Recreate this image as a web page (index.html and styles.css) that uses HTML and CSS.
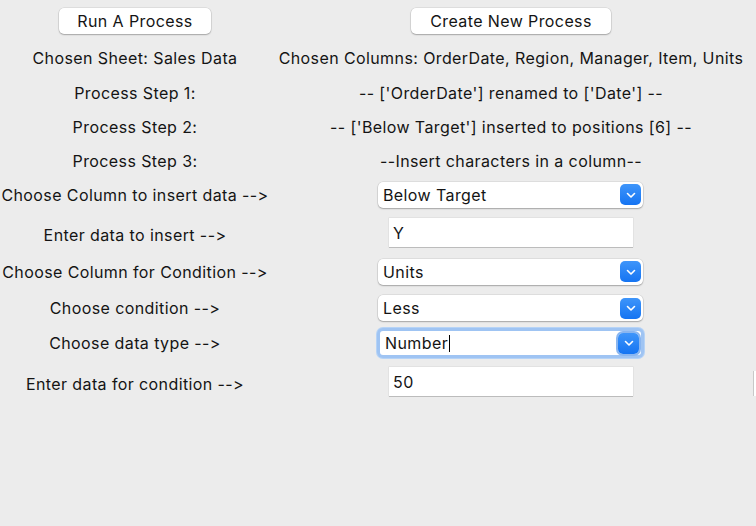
FILE: index.html
```html
<!DOCTYPE html>
<html>
<head>
<meta charset="utf-8">
<link rel="stylesheet" href="styles.css">
</head>
<body>
<div class="app">
  <div class="cell"><button class="btn btn-run">Run A Process</button></div>
  <div class="cell"><button class="btn btn-create">Create New Process</button></div>
  <div class="extra"></div>

  <div class="cell label">Chosen Sheet: Sales Data</div>
  <div class="cell label">Chosen Columns: OrderDate, Region, Manager, Item, Units</div>
  <div class="extra"></div>

  <div class="cell label">Process Step 1:</div>
  <div class="cell label">-- ['OrderDate'] renamed to ['Date'] --</div>
  <div class="extra"></div>

  <div class="cell label">Process Step 2:</div>
  <div class="cell label">-- ['Below Target'] inserted to positions [6] --</div>
  <div class="extra"></div>

  <div class="cell label">Process Step 3:</div>
  <div class="cell label">--Insert characters in a column--</div>
  <div class="extra"></div>

  <div class="cell label">Choose Column to insert data --&gt;</div>
  <div class="cell">
    <div class="combo"><span class="combo-text">Below Target</span><span class="chev"><svg width="10" height="7" viewBox="0 0 10 7"><path d="M1.5 1.5 L5 5 L8.5 1.5" fill="none" stroke="#fff" stroke-width="1.6" stroke-linecap="round" stroke-linejoin="round"/></svg></span></div>
  </div>
  <div class="extra"></div>

  <div class="cell label low">Enter data to insert --&gt;</div>
  <div class="cell"><div class="entry">Y</div></div>
  <div class="extra"></div>

  <div class="cell label">Choose Column for Condition --&gt;</div>
  <div class="cell">
    <div class="combo"><span class="combo-text">Units</span><span class="chev"><svg width="10" height="7" viewBox="0 0 10 7"><path d="M1.5 1.5 L5 5 L8.5 1.5" fill="none" stroke="#fff" stroke-width="1.6" stroke-linecap="round" stroke-linejoin="round"/></svg></span></div>
  </div>
  <div class="extra"></div>

  <div class="cell label">Choose condition --&gt;</div>
  <div class="cell">
    <div class="combo"><span class="combo-text">Less</span><span class="chev"><svg width="10" height="7" viewBox="0 0 10 7"><path d="M1.5 1.5 L5 5 L8.5 1.5" fill="none" stroke="#fff" stroke-width="1.6" stroke-linecap="round" stroke-linejoin="round"/></svg></span></div>
  </div>
  <div class="extra"></div>

  <div class="cell label">Choose data type --&gt;</div>
  <div class="cell">
    <div class="combo focused"><span class="combo-text">Number<span class="caret"></span></span><span class="chev"><svg width="10" height="7" viewBox="0 0 10 7"><path d="M1.5 1.5 L5 5 L8.5 1.5" fill="none" stroke="#fff" stroke-width="1.6" stroke-linecap="round" stroke-linejoin="round"/></svg></span></div>
  </div>
  <div class="extra"></div>

  <div class="cell label low">Enter data for condition --&gt;</div>
  <div class="cell"><div class="entry">50</div></div>
  <div class="extra"><div class="entry-stub"></div></div>
</div>
</body>
</html>
```

FILE: styles.css
```css
html, body {
  margin: 0;
  padding: 0;
  background: #ececec;
}
body {
  width: 756px;
  height: 526px;
  overflow: hidden;
  font-family: "Inter", "Liberation Sans", sans-serif;
  font-size: 16px;
  letter-spacing: 0.4px;
  font-variant-ligatures: none;
  font-feature-settings: "calt" 0, "liga" 0;
  color: #141414;
}
.app {
  display: grid;
  grid-template-columns: 270px 482px 4px;
  grid-template-rows: 41px 34px 35px 34px 33px 35px 41px 37px 36px 34px 43px;
}
.cell {
  display: flex;
  align-items: center;
  justify-content: center;
  white-space: nowrap;
}
.extra {
  display: flex;
  align-items: center;
}
.label.low {
  padding-top: 4px;
}
.btn {
  font: inherit;
  letter-spacing: inherit;
  font-feature-settings: inherit;
  color: #141414;
  background: #fff;
  border: none;
  border-radius: 5px;
  height: 26px;
  padding: 0;
  margin-top: 1px;
  box-shadow: 0 0 0 0.5px rgba(0,0,0,0.12), 0 1px 1.5px rgba(0,0,0,0.25);
}
.btn-run { width: 152px; }
.btn-create { width: 200px; }
.combo {
  width: 265px;
  height: 26px;
  box-sizing: border-box;
  background: #fff;
  border-radius: 5px;
  display: flex;
  align-items: center;
  justify-content: space-between;
  padding: 0 2px 0 5px;
  box-shadow: 0 0 0 0.5px rgba(0,0,0,0.12), 0 1px 1.5px rgba(0,0,0,0.25);
  margin-left: -1px;
}
.combo.focused {
  height: 24px;
  width: 261px;
  border-radius: 3px;
  box-shadow: 0 0 0 3px #9fc4f3, 0 0 0 4px #b6d3f6;
}
.combo-text {
  display: flex;
  align-items: center;
}
.caret {
  display: inline-block;
  width: 1px;
  height: 17px;
  background: #000;
  margin-left: 1px;
}
.chev {
  width: 21px;
  height: 21px;
  border-radius: 5px;
  background: linear-gradient(#3e95fa, #1574f2);
  display: flex;
  align-items: center;
  justify-content: center;
}
.chev svg { display: block; margin-top: 1px; }
.focused .chev {
  box-shadow: 0 0 0 2px #8ab6f0;
}
.entry {
  width: 244px;
  height: 29px;
  box-sizing: border-box;
  background: #fff;
  padding: 0 4px;
  display: flex;
  align-items: center;
  box-shadow: 0 0 0 0.5px rgba(0,0,0,0.08), 0 1px 0 #c4c4c4;
}
.entry-stub {
  width: 3px;
  height: 25px;
  margin-left: 1px;
  margin-top: 4px;
  background: #fff;
  border-left: 1px solid #c8c8c8;
}
```
